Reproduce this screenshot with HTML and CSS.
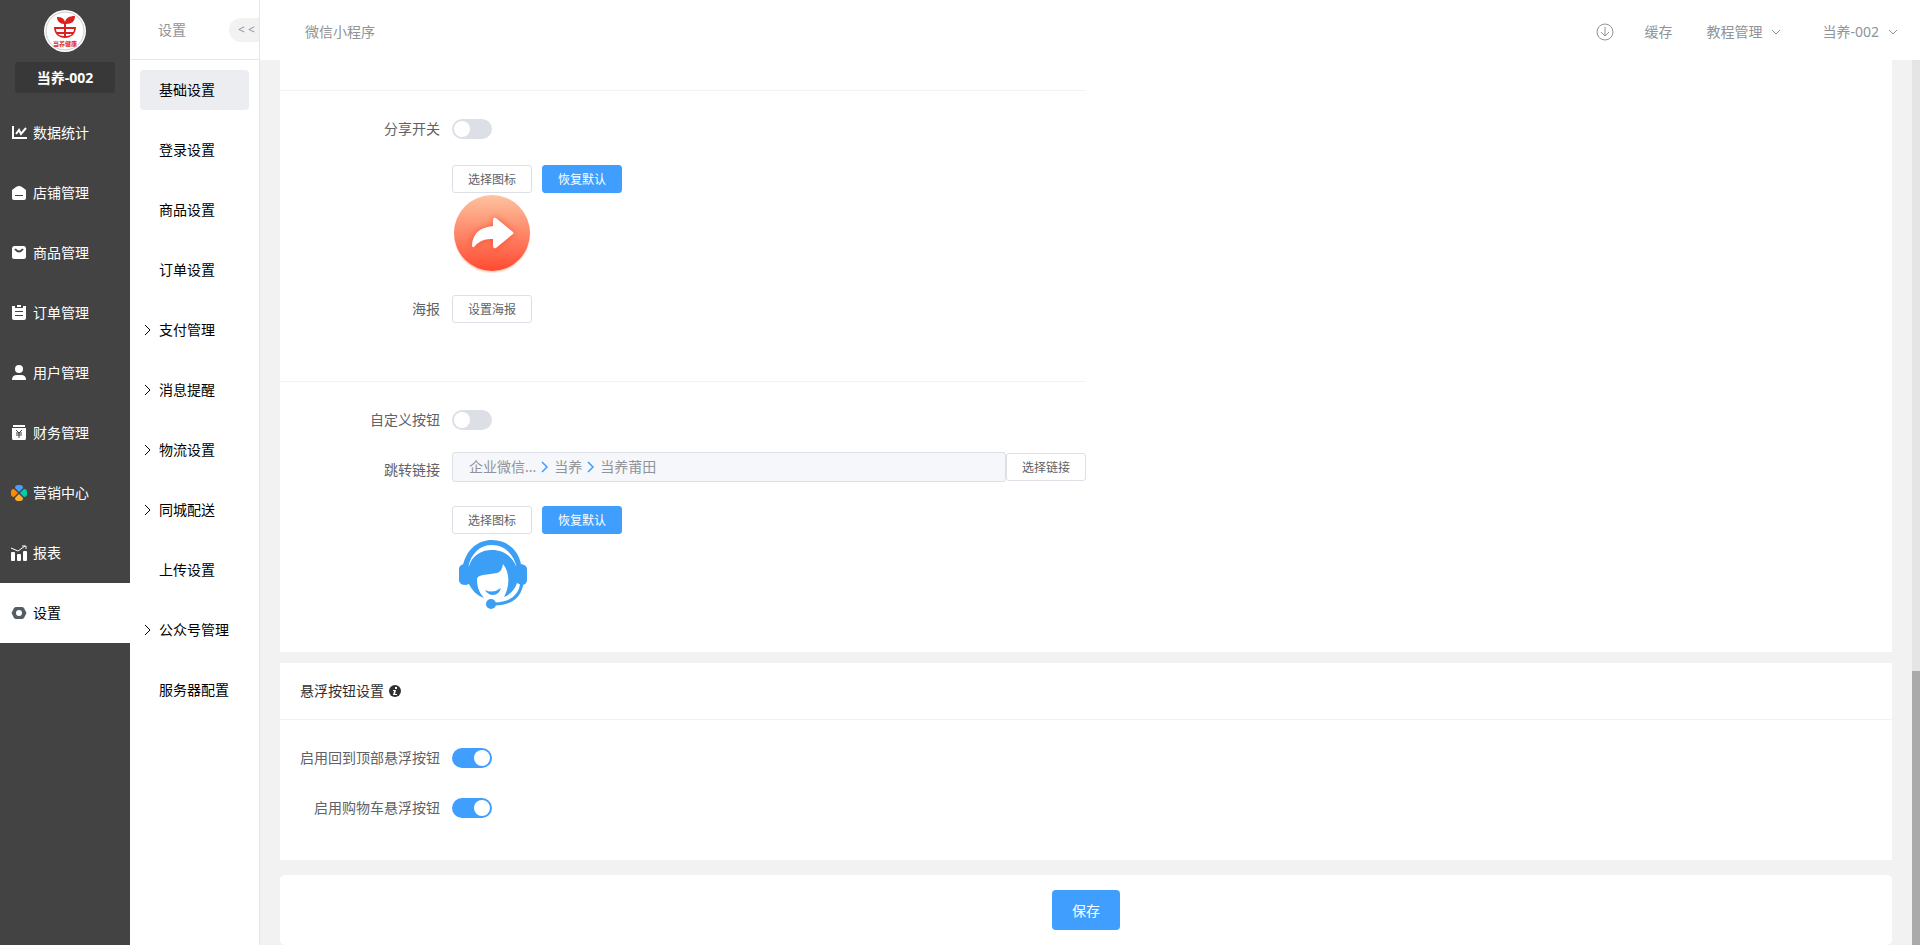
FILE: index.html
```html
<!DOCTYPE html>
<html lang="zh-CN">
<head>
  <meta charset="UTF-8">
  <title>微信小程序</title>
  <link rel="stylesheet" href="styles.css">
</head>
<body>
  <aside class="sidebar">
    <svg class="logo" viewBox="0 0 42 42">
      <circle cx="21" cy="21" r="21" fill="#fff"/>
      <circle cx="21" cy="21" r="19" fill="none" stroke="#c8c8c8" stroke-width="1"/>
      <g fill="#dc1f1f">
        <path d="M20 14C16 14 13 11 13 7c4 0 7 1 8 5 1-4 4-6 10-6 0 5-3 8-9 8v3h-2z"/>
        <path d="M10 17h22c0 7-5 11-11 11s-11-4-11-11zm2 2c0 1 0 2 1 3h7v-3zm10 0v3h7c1-1 1-2 1-3zm-8 5c1 1 3 2 6 2v-2zm8 0v2c3 0 5-1 6-2z"/>
        <text x="21" y="36" font-size="6" font-weight="700" text-anchor="middle">当养健康</text>
      </g>
    </svg>
    <div class="shop-name">当养-002</div>
    <nav class="menu">
      <a href="#" class="menu-item">
        <svg viewBox="0 0 16 16" fill="none" stroke="#fff" stroke-width="2"><path d="M2 1v12h14"/><path d="M5 9l3-4 2 4 5-6"/></svg>
        数据统计
      </a>
      <a href="#" class="menu-item">
        <svg viewBox="0 0 16 16"><path fill="#fff" fill-rule="evenodd" d="M1 5l4-3q3-2 6 0l4 3v8q0 2-2 2H3q-2 0-2-2zm3 5v1h8v-1z"/></svg>
        店铺管理
      </a>
      <a href="#" class="menu-item">
        <svg viewBox="0 0 16 16"><path fill="#fff" d="M3 1h10q1 0 2 2v9q0 2-2 2H3q-2 0-2-2V3q1-2 2-2z"/><path d="M4 4q4 5 8 0" fill="none" stroke="#434343" stroke-width="2"/></svg>
        商品管理
      </a>
      <a href="#" class="menu-item">
        <svg viewBox="0 0 16 16"><path fill="#fff" fill-rule="evenodd" d="M1 1h3v2h8V1h3v12q0 2-2 2H3q-2 0-2-2zm3 5v1h8V6zm0 4v1h8v-1z"/><path fill="#fff" d="M6 0h4v2H6z"/></svg>
        订单管理
      </a>
      <a href="#" class="menu-item">
        <svg viewBox="0 0 16 16" fill="#fff"><circle cx="8" cy="4" r="4"/><path d="M1 15q0-5 5-5h4q5 0 5 5z"/></svg>
        用户管理
      </a>
      <a href="#" class="menu-item">
        <svg viewBox="0 0 16 16"><path fill="#fff" d="M2 0h12v2H2zM1 3h14v10q0 2-1 2H2q-1 0-1-2z"/><path d="M5 5l3 3 3-3M8 8v5M5 8h6M5 10h6" fill="none" stroke="#434343"/></svg>
        财务管理
      </a>
      <a href="#" class="menu-item">
        <svg viewBox="0 0 16 16"><path fill="#4a9cff" d="M8 7L4 3q0-3 3-3h2q3 0 3 3z"/><path fill="#ff8a00" d="M7 8l-4 4q-3 0-3-3V7q0-3 3-3z"/><path fill="#00d0a8" d="M9 8l4 4q3 0 3-3V7q0-3-3-3z"/><path fill="#ffb030" d="M8 9l-4 4q0 3 3 3h2q3 0 3-3z"/></svg>
        营销中心
      </a>
      <a href="#" class="menu-item">
        <svg viewBox="0 0 16 16" fill="#fff"><rect y="7" width="4" height="9" rx="1"/><rect x="6" y="9" width="4" height="7" rx="1"/><rect x="12" y="6" width="4" height="10" rx="1"/><path d="M0 3l7 3 7-5M11 1h4v3" fill="none" stroke="#fff"/></svg>
        报表
      </a>
      <a href="#" class="menu-item active">
        <svg viewBox="0 0 16 16"><path fill="#545c64" fill-rule="evenodd" d="M5 2h6q1 0 2 1l2 4q1 1 0 2l-2 4q-1 1-2 1H5q-1 0-2-1L1 9q-1-1 0-2l2-4q1-1 2-1zm3 3a3 3 0 1 0 0 6 3 3 0 0 0 0-6z"/></svg>
        设置
      </a>
    </nav>
  </aside>

  <aside class="submenu">
    <div class="submenu-head">
      <span>设置</span>
      <button type="button" class="collapse">&lt; &lt;</button>
    </div>
    <nav class="submenu-list">
      <a href="#" class="submenu-item active">基础设置</a>
      <a href="#" class="submenu-item">登录设置</a>
      <a href="#" class="submenu-item">商品设置</a>
      <a href="#" class="submenu-item">订单设置</a>
      <a href="#" class="submenu-item has-children"><svg viewBox="0 0 6 12"><path d="M0 1l5 5-5 5"/></svg>支付管理</a>
      <a href="#" class="submenu-item has-children"><svg viewBox="0 0 6 12"><path d="M0 1l5 5-5 5"/></svg>消息提醒</a>
      <a href="#" class="submenu-item has-children"><svg viewBox="0 0 6 12"><path d="M0 1l5 5-5 5"/></svg>物流设置</a>
      <a href="#" class="submenu-item has-children"><svg viewBox="0 0 6 12"><path d="M0 1l5 5-5 5"/></svg>同城配送</a>
      <a href="#" class="submenu-item">上传设置</a>
      <a href="#" class="submenu-item has-children"><svg viewBox="0 0 6 12"><path d="M0 1l5 5-5 5"/></svg>公众号管理</a>
      <a href="#" class="submenu-item">服务器配置</a>
    </nav>
  </aside>

  <div class="main">
    <header class="topbar">
      <span class="page-name">微信小程序</span>
      <button type="button" class="top-link download" aria-label="下载">
        <svg viewBox="0 0 18 18" fill="none" stroke="#909399"><circle cx="9" cy="9" r="8"/><path d="M9 4v9M5 9l4 4 4-4"/></svg>
      </button>
      <button type="button" class="top-link cache">缓存</button>
      <button type="button" class="top-link dropdown">教程管理<svg viewBox="0 0 10 6"><path d="M1 1l4 4 4-4"/></svg></button>
      <button type="button" class="top-link dropdown">当养-002<svg viewBox="0 0 10 6"><path d="M1 1l4 4 4-4"/></svg></button>
    </header>

    <div class="scroll-area">
      <main class="content">
        <section class="card card-buttons">
          <div class="group">
            <div class="form-row">
              <label class="form-label" for="share">分享开关</label>
              <input type="checkbox" class="switch" id="share">
            </div>
            <div class="form-row icon-row">
              <span class="form-label"></span>
              <div class="icon-field">
                <div class="btn-line">
                  <button type="button" class="btn">选择图标</button>
                  <button type="button" class="btn btn-primary">恢复默认</button>
                </div>
                <svg class="preview" viewBox="0 0 80 80">
                  <defs>
                    <linearGradient id="orange" x1="0" y1="0" x2="0" y2="1">
                      <stop offset="0" stop-color="#fdc3a0"/>
                      <stop offset="1" stop-color="#ff4a31"/>
                    </linearGradient>
                    <filter id="soft" x="-20%" y="-20%" width="140%" height="140%"><feGaussianBlur stdDeviation="1"/></filter>
                    <filter id="glow" x="-40%" y="-40%" width="180%" height="180%"><feGaussianBlur stdDeviation="3"/></filter>
                  </defs>
                  <circle cx="40" cy="42" r="37" fill="#ff7a50" opacity=".6" filter="url(#soft)"/>
                  <circle cx="40" cy="40" r="38" fill="url(#orange)"/>
                  <path d="M41 27q0-3 3-2l17 14q1 1 0 2L44 55q-3 1-3-2v-7q-12-1-19 8-2 1-2-2 1-17 21-19z" fill="#f43a1c" opacity=".7" filter="url(#glow)"/>
                  <path d="M41 27q0-3 3-2l17 14q1 1 0 2L44 55q-3 1-3-2v-7q-12-1-19 8-2 1-2-2 1-17 21-19z" fill="#fff"/>
                </svg>
              </div>
            </div>
            <div class="form-row">
              <span class="form-label">海报</span>
              <button type="button" class="btn">设置海报</button>
            </div>
          </div>

          <div class="group">
            <div class="form-row">
              <label class="form-label" for="custom">自定义按钮</label>
              <input type="checkbox" class="switch" id="custom">
            </div>
            <div class="form-row">
              <span class="form-label">跳转链接</span>
              <div class="link-field">
                <div class="link-path">
                  <span>企业微信...</span>
                  <svg viewBox="0 0 8 12"><path d="M1 1l5 5-5 5"/></svg>
                  <span>当养</span>
                  <svg viewBox="0 0 8 12"><path d="M1 1l5 5-5 5"/></svg>
                  <span>当养莆田</span>
                </div>
                <button type="button" class="btn">选择链接</button>
              </div>
            </div>
            <div class="form-row icon-row">
              <span class="form-label"></span>
              <div class="icon-field">
                <div class="btn-line">
                  <button type="button" class="btn">选择图标</button>
                  <button type="button" class="btn btn-primary">恢复默认</button>
                </div>
                <svg class="preview" viewBox="0 0 80 80">
                  <g fill="#3a9ff5">
                    <path d="M11 31C15 15 26 6 40 6s26 9 29 24l-4 4C61 19 52 11 40 11S19 19 16 34z"/>
                    <path d="M7 35q0-4 5-5l5 2C20 22 29 16 40 16s20 6 24 16l5-2q6 1 6 5v11q0 5-6 5l-4-2c-2 6-6 11-13 14 5-9 7-23-1-33-1 6-3 8-6 9q-6 1-14 2-6 1-6 4c0 8 2 13 7 19-8-3-12-8-15-14l-3 1q-7 0-7-5z"/>
                    <path d="M33 56q8 4 16-2-2 7-8 7-5 0-8-5z"/>
                    <circle cx="39" cy="70" r="5"/>
                  </g>
                  <path d="M70 49c-2 13-11 21-28 21" fill="none" stroke="#3a9ff5" stroke-width="3"/>
                </svg>
              </div>
            </div>
          </div>
        </section>

        <section class="card card-float">
          <h2 class="card-title">悬浮按钮设置
            <svg viewBox="0 0 12 12"><circle cx="6" cy="6" r="6" fill="#303133"/><path d="M6 2h2v2H6zM4 5h3L6 9h2v1H4l1-4H4z" fill="#fff"/></svg>
          </h2>
          <div class="card-body">
            <div class="form-row">
              <label class="form-label" for="totop">启用回到顶部悬浮按钮</label>
              <input type="checkbox" class="switch" id="totop" checked>
            </div>
            <div class="form-row">
              <label class="form-label" for="cart">启用购物车悬浮按钮</label>
              <input type="checkbox" class="switch" id="cart" checked>
            </div>
          </div>
        </section>

        <section class="card card-save">
          <button type="submit" class="btn-save">保存</button>
        </section>
      </main>
      <div class="scroll-track"><div class="scroll-thumb"></div></div>
    </div>
  </div>
</body>
</html>
```
FILE: styles.css
```css
* {
  box-sizing: border-box;
}
body {
  margin: 0;
  display: flex;
  height: 100vh;
  overflow: hidden;
  font-family: "Noto Sans", "Noto Sans CJK SC", sans-serif;
  font-size: 14px;
  line-height: 20px;
  color: #606266;
  background: #f2f2f2;
}
a {
  text-decoration: none;
}
button {
  font-family: inherit;
  cursor: pointer;
}
svg {
  display: block;
  flex-shrink: 0;
}

/* left sidebar */
.sidebar {
  flex: 0 0 130px;
  display: flex;
  flex-direction: column;
  align-items: center;
  padding-top: 10px;
  background: #434343;
}
.logo {
  width: 42px;
  height: 42px;
}
.shop-name {
  width: 100px;
  margin: 10px 0;
  border-radius: 3px;
  background: #383838;
  color: #fff;
  font-weight: bold;
  line-height: 31px;
  text-align: center;
}
.menu {
  width: 100%;
}
.menu-item {
  display: flex;
  align-items: center;
  gap: 6px;
  height: 60px;
  padding-left: 11px;
  color: #fff;
}
.menu-item svg {
  width: 16px;
  height: 16px;
}
.menu-item.active {
  background: #fff;
  color: #000;
}

/* second level menu */
.submenu {
  flex: 0 0 130px;
  border-right: 1px solid #e6e6e6;
  background: #fff;
}
.submenu-head {
  display: flex;
  align-items: center;
  justify-content: space-between;
  height: 60px;
  padding-left: 28px;
  border-bottom: 1px solid #e6e6e6;
  color: #909399;
}
.collapse {
  width: 30px;
  height: 24px;
  padding: 0 0 0 5px;
  border: none;
  border-radius: 12px 0 0 12px;
  background: #f2f2f2;
  color: #909399;
  font-size: 12px;
}
.submenu-list {
  display: flex;
  flex-direction: column;
  gap: 20px;
  padding: 10px;
}
.submenu-item {
  display: flex;
  align-items: center;
  gap: 8px;
  height: 40px;
  padding-left: 19px;
  border-radius: 4px;
  color: #000;
  white-space: nowrap;
}
.submenu-item.active {
  background: #ebedf1;
}
.submenu-item.has-children {
  padding-left: 5px;
}
.submenu-item svg {
  width: 6px;
  height: 12px;
  fill: none;
  stroke: #000;
}

/* top bar */
.main {
  flex: 1;
  display: flex;
  flex-direction: column;
  min-width: 0;
}
.topbar {
  flex: 0 0 60px;
  display: flex;
  align-items: center;
  padding: 3px 21px 0 45px;
  background: #fff;
  color: #909399;
}
.page-name {
  margin-right: auto;
}
.top-link {
  display: flex;
  align-items: center;
  padding: 0;
  border: none;
  background: none;
  color: #909399;
  font-size: 14px;
  line-height: 20px;
}
.download svg {
  width: 18px;
  height: 18px;
}
.cache {
  margin: 0 34px 0 30px;
}
.dropdown svg {
  width: 10px;
  height: 6px;
  margin: 0 1px 0 9px;
  fill: none;
  stroke: #909399;
}
.dropdown + .dropdown {
  margin-left: 40px;
}

/* content */
.scroll-area {
  flex: 1;
  display: flex;
  min-height: 0;
}
.content {
  flex: 1;
  min-width: 0;
  padding: 0 20px;
  overflow: hidden;
}
.scroll-track {
  flex: 0 0 8px;
  display: flex;
  flex-direction: column;
  justify-content: flex-end;
  background: #e5e5e5;
}
.scroll-thumb {
  height: 31%;
  background: #aaa;
}
.card {
  background: #fff;
}
.card-buttons {
  padding-top: 30px;
  margin-bottom: 11px;
}
.group {
  width: 50%;
  padding: 18px 0 52px;
  border-top: 1px solid #f2f2f2;
}
.group + .group {
  padding-bottom: 32px;
}
.form-row {
  display: flex;
  align-items: center;
  height: 40px;
  gap: 12px;
}
.form-row + .form-row {
  margin-top: 10px;
}
.icon-row {
  height: 120px;
}
.form-label {
  flex: 0 0 160px;
  text-align: right;
  white-space: nowrap;
}
.icon-field {
  height: 120px;
}
.btn-line {
  display: flex;
  gap: 10px;
  padding-top: 6px;
}
.btn {
  width: 80px;
  height: 28px;
  padding: 0;
  border: 1px solid #dcdfe6;
  border-radius: 3px;
  background: #fff;
  color: #606266;
  font-size: 12px;
}
.btn-primary {
  border-color: #409eff;
  background: #409eff;
  color: #fff;
}
.preview {
  width: 80px;
  height: 80px;
}
.link-field {
  flex: 1;
  display: flex;
  align-items: center;
  height: 40px;
  padding-bottom: 6px;
}
.link-path {
  flex: 1;
  display: flex;
  align-items: center;
  gap: 5px;
  height: 30px;
  padding-left: 16px;
  border: 1px solid #dcdfe6;
  border-radius: 3px;
  background: #f5f7fa;
  color: #909399;
}
.link-path svg {
  width: 8px;
  height: 12px;
  fill: none;
  stroke: #409eff;
  stroke-width: 1.5;
}
.switch {
  appearance: none;
  display: flex;
  width: 40px;
  height: 20px;
  margin: 0;
  padding: 2px;
  border-radius: 10px;
  background: #dcdfe6;
  cursor: pointer;
}
.switch::before {
  content: "";
  width: 16px;
  height: 16px;
  border-radius: 50%;
  background: #fff;
}
.switch:checked {
  justify-content: flex-end;
  background: #409eff;
}
.card-float {
  margin-bottom: 15px;
}
.card-title {
  display: flex;
  align-items: center;
  gap: 5px;
  height: 57px;
  margin: 0;
  padding-left: 20px;
  border-bottom: 1px solid #f2f2f2;
  color: #303133;
  font-size: 14px;
  font-weight: normal;
}
.card-title svg {
  width: 12px;
  height: 12px;
}
.card-body {
  padding: 18px 0 32px;
}
.card-save {
  display: flex;
  justify-content: center;
  padding: 15px;
  border-radius: 5px;
}
.btn-save {
  width: 68px;
  height: 40px;
  padding: 0;
  border: none;
  border-radius: 4px;
  background: #409eff;
  color: #fff;
  font-size: 14px;
}
```
